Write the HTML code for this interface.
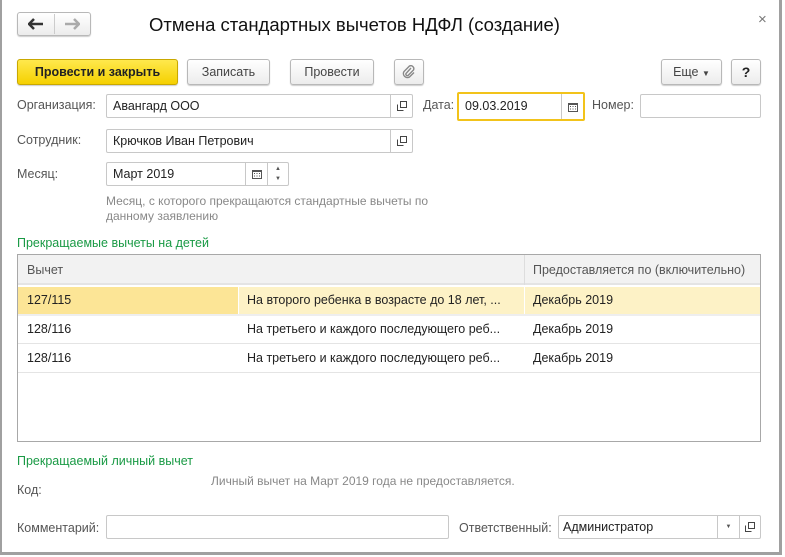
<!DOCTYPE html>
<html><head><meta charset="utf-8"><style>
*{box-sizing:border-box;margin:0;padding:0}
body{width:785px;height:557px;background:#fff;font-family:"Liberation Sans",Arial,sans-serif;font-size:12px;color:#333;position:relative;overflow:hidden}
.a{position:absolute}
.win{left:0;top:0;width:782px;height:555px;border-left:2px solid #a0a0a0;border-right:3px solid #a0a0a0;border-bottom:3px solid #a0a0a0;background:#fff}
.btn{position:absolute;height:26px;border:1px solid #b8b8b8;border-radius:3px;background:linear-gradient(#fff,#ececec);box-shadow:0 1px 1px rgba(0,0,0,.2);text-align:center;line-height:24px;color:#444;font-size:12.5px}
.inp{position:absolute;height:24px;border:1px solid #c8c8c8;border-radius:2px;background:#fff;line-height:22px;padding-left:6px;font-size:12.5px;color:#222}
.lbl{position:absolute;color:#555;font-size:12.5px}
.ico{position:absolute;top:0;right:0;width:22px;height:22px;border-left:1px solid #c8c8c8;display:flex;align-items:center;justify-content:center}
.green{color:#1a9a45;font-size:12.5px}
.cell{position:absolute;line-height:28px;font-size:12.5px;color:#222}
</style></head><body>
<svg width="0" height="0" style="position:absolute"><defs>
<symbol id="cp" viewBox="0 0 10 10"><rect x="3.5" y="0.5" width="6" height="6" fill="none" stroke="#444"/><path d="M0.5 3.5v6h6" fill="none" stroke="#444"/></symbol>
<symbol id="cal" viewBox="0 0 10 10"><rect x="0" y="1" width="10" height="9" fill="#555"/><rect x="1" y="3" width="8" height="6" fill="#fff"/><path d="M2 4h1v1H2zM4.5 4h1v1h-1zM7 4h1v1H7zM2 6.5h1v1H2zM4.5 6.5h1v1h-1zM7 6.5h1v1H7z" fill="#555"/></symbol>
</defs></svg>
<div class="a win"></div>
<div class="btn" style="left:17px;top:12px;width:74px;height:24px"></div>
<div class="a" style="left:54px;top:14px;width:1px;height:20px;background:#ccc"></div>
<svg class="a" style="left:28px;top:18px" width="16" height="12"><path d="M1 6h14M6 1L1 6l5 5" stroke="#333" stroke-width="2.5" fill="none"/></svg>
<svg class="a" style="left:64px;top:18px" width="16" height="12"><path d="M1 6h14M10 1l5 5-5 5" stroke="#aaa" stroke-width="2.5" fill="none"/></svg>
<div class="a" style="left:149px;top:14px;font-size:18.5px;color:#111">Отмена стандартных вычетов НДФЛ (создание)</div>
<div class="a" style="left:758px;top:11px;font-size:15px;color:#777">×</div>

<div class="btn" style="left:17px;top:59px;width:161px;background:linear-gradient(#ffe94d,#f5d000);border-color:#c9a800;color:#222;font-weight:bold">Провести и закрыть</div>
<div class="btn" style="left:187px;top:59px;width:83px">Записать</div>
<div class="btn" style="left:290px;top:59px;width:84px">Провести</div>
<div class="btn" style="left:394px;top:59px;width:30px"><svg width="14" height="14" style="margin-top:5px" viewBox="0 0 14 14"><path d="M9 3L4 8.5a1.5 1.5 0 0 0 2 2L11.5 5a3 3 0 0 0-4-4L2 6.5a4 4 0 0 0 5.5 5.5L12 7.5" fill="none" stroke="#888" stroke-width="1.4"/></svg></div>
<div class="btn" style="left:661px;top:59px;width:61px">Еще <span style="font-size:8px">▼</span></div>
<div class="btn" style="left:731px;top:59px;width:30px;font-weight:bold;color:#222;font-size:14px">?</div>

<div class="lbl" style="left:17px;top:98px">Организация:</div>
<div class="inp" style="left:106px;top:94px;width:307px">Авангард ООО<div class="ico"><svg width="10" height="10"><use href="#cp"/></svg></div></div>
<div class="lbl" style="left:423px;top:98px">Дата:</div>
<div class="inp" style="left:457px;top:92px;width:128px;height:29px;border:2px solid #f2c31a;line-height:24px">09.03.2019<div class="ico" style="height:25px"><svg width="10" height="10"><use href="#cal"/></svg></div></div>
<div class="lbl" style="left:592px;top:98px">Номер:</div>
<div class="inp" style="left:640px;top:94px;width:121px"></div>

<div class="lbl" style="left:17px;top:133px">Сотрудник:</div>
<div class="inp" style="left:106px;top:129px;width:307px">Крючков Иван Петрович<div class="ico"><svg width="10" height="10"><use href="#cp"/></svg></div></div>

<div class="lbl" style="left:17px;top:167px">Месяц:</div>
<div class="inp" style="left:106px;top:162px;width:183px">Март 2019<div class="ico" style="right:21px"><svg width="10" height="10"><use href="#cal"/></svg></div><div class="ico" style="width:21px;flex-direction:column;font-size:6px;line-height:10px;color:#555">▲<br>▼</div></div>
<div class="a" style="left:106px;top:194px;color:#888;font-size:12px;line-height:15px">Месяц, с которого прекращаются стандартные вычеты по<br>данному заявлению</div>

<div class="a green" style="left:17px;top:236px">Прекращаемые вычеты на детей</div>
<div class="a" style="left:17px;top:254px;width:744px;height:188px;border:1px solid #a8a8a8;background:#fff">
 <div class="a" style="left:0;top:0;width:742px;height:30px;background:#f2f2f2;border-bottom:2px solid #e4e4e4"></div>
 <div class="a" style="left:506px;top:0;width:1px;height:30px;background:#ddd"></div>
 <div class="a" style="left:9px;top:8px;color:#555;font-size:12.5px">Вычет</div>
 <div class="a" style="left:515px;top:8px;color:#555;font-size:12.5px">Предоставляется по (включительно)</div>
 <div class="a" style="left:0;top:32px;width:742px;height:27px;background:#fdf2c6"></div>
 <div class="a" style="left:0;top:32px;width:220px;height:27px;background:#fce596"></div>
 <div class="a" style="left:220px;top:32px;width:1px;height:27px;background:#fff"></div>
 <div class="a" style="left:506px;top:32px;width:1px;height:27px;background:#fff"></div>
 <div class="a" style="left:0;top:59px;width:742px;height:2px;background:#eee"></div>
 <div class="a" style="left:0;top:88px;width:742px;height:1px;background:#e4e4e4"></div>
 <div class="a" style="left:0;top:117px;width:742px;height:1px;background:#e4e4e4"></div>
 <div class="cell" style="left:9px;top:31px">127/115</div><div class="cell" style="left:229px;top:31px">На второго ребенка в возрасте до 18 лет, ...</div><div class="cell" style="left:515px;top:31px">Декабрь 2019</div>
 <div class="cell" style="left:9px;top:60px">128/116</div><div class="cell" style="left:229px;top:60px">На третьего и каждого последующего реб...</div><div class="cell" style="left:515px;top:60px">Декабрь 2019</div>
 <div class="cell" style="left:9px;top:89px">128/116</div><div class="cell" style="left:229px;top:89px">На третьего и каждого последующего реб...</div><div class="cell" style="left:515px;top:89px">Декабрь 2019</div>
</div>

<div class="a green" style="left:17px;top:454px">Прекращаемый личный вычет</div>
<div class="a" style="left:211px;top:474px;color:#888;font-size:12px">Личный вычет на Март 2019 года не предоставляется.</div>
<div class="lbl" style="left:17px;top:483px">Код:</div>

<div class="lbl" style="left:17px;top:521px">Комментарий:</div>
<div class="inp" style="left:106px;top:515px;width:343px"></div>
<div class="lbl" style="left:459px;top:521px">Ответственный:</div>
<div class="inp" style="left:558px;top:515px;width:203px;padding-left:4px">Администратор<div class="ico" style="right:21px;font-size:6px;color:#555">▼</div><div class="ico" style="width:21px"><svg width="10" height="10"><use href="#cp"/></svg></div></div>
</body></html>
